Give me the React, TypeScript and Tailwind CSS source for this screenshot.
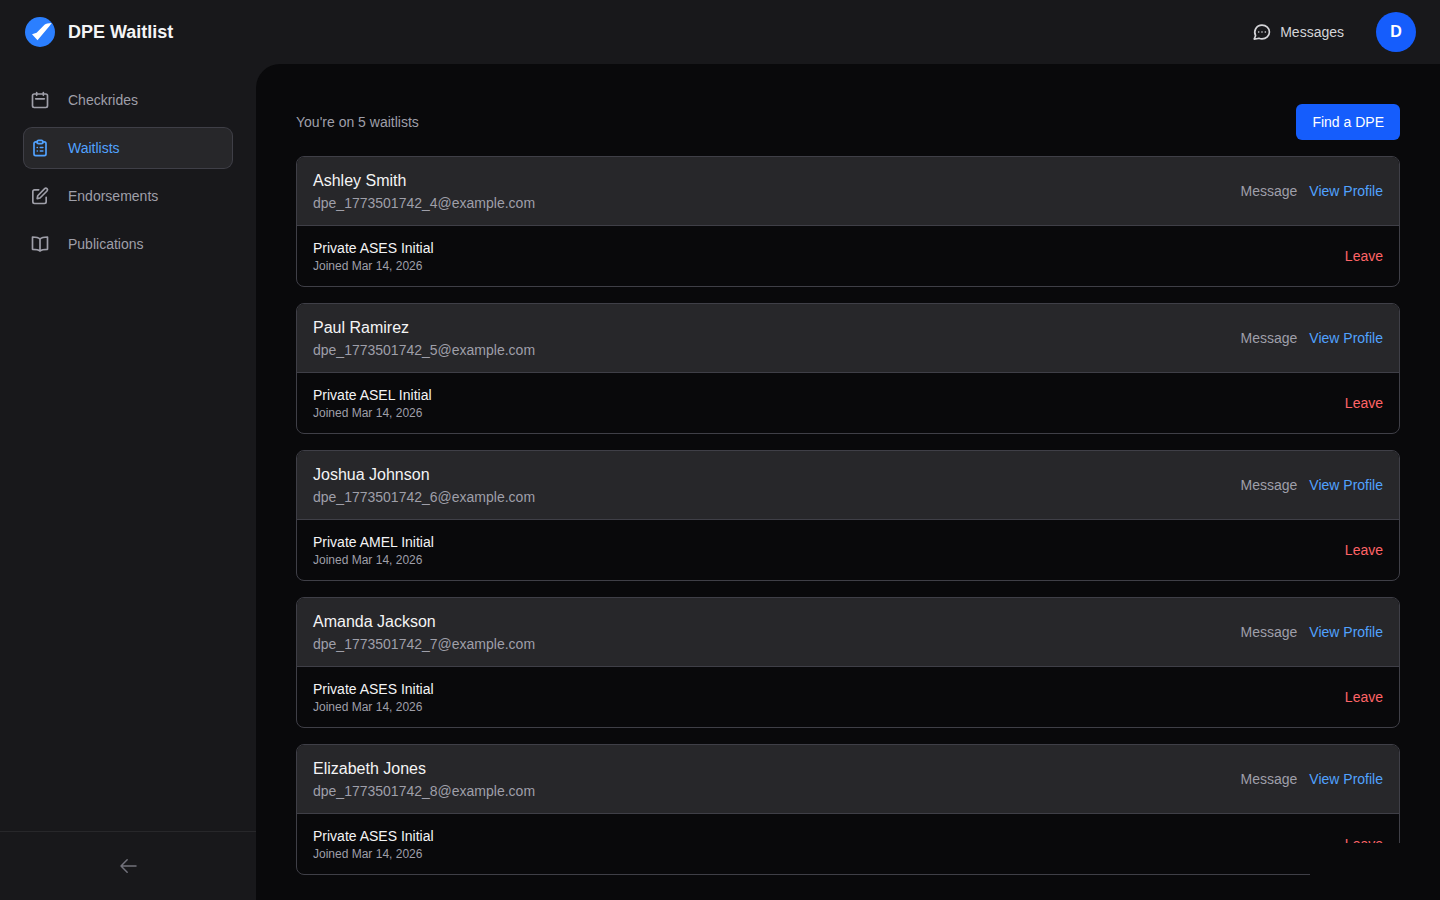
import type { ReactNode } from "react"

type Waitlist = {
  name: string
  email: string
  checkride: string
  joined: string
}

const waitlists: Waitlist[] = [
  { name: "Ashley Smith", email: "dpe_1773501742_4@example.com", checkride: "Private ASES Initial", joined: "Mar 14, 2026" },
  { name: "Paul Ramirez", email: "dpe_1773501742_5@example.com", checkride: "Private ASEL Initial", joined: "Mar 14, 2026" },
  { name: "Joshua Johnson", email: "dpe_1773501742_6@example.com", checkride: "Private AMEL Initial", joined: "Mar 14, 2026" },
  { name: "Amanda Jackson", email: "dpe_1773501742_7@example.com", checkride: "Private ASES Initial", joined: "Mar 14, 2026" },
  { name: "Elizabeth Jones", email: "dpe_1773501742_8@example.com", checkride: "Private ASES Initial", joined: "Mar 14, 2026" },
]

function Icon({ children, width = 2 }: { children: ReactNode; width?: number }) {
  return (
    <svg
      viewBox="0 0 24 24"
      fill="none"
      stroke="currentColor"
      strokeWidth={width}
      strokeLinecap="round"
      strokeLinejoin="round"
      className="size-5"
      aria-hidden="true"
    >
      {children}
    </svg>
  )
}

const navItems = [
  {
    label: "Checkrides",
    icon: (
      <Icon>
        <rect x="3" y="4.8" width="18" height="16.2" rx="2" />
        <path d="M8 3v3.4M16 3v3.4M6.8 10.6h10.4" />
      </Icon>
    ),
  },
  {
    label: "Waitlists",
    active: true,
    icon: (
      <Icon>
        <path d="M8 4.6H6.8a2 2 0 0 0-2 2v12.6a2 2 0 0 0 2 2h10.4a2 2 0 0 0 2-2V6.600a2 2 0 0 0-2-2H16" />
        <rect x="8.4" y="2.8" width="7.2" height="4" rx="2" />
        <path d="M8.700 11.400h.1M12.400 11.400h3M8.700 15.600h.1M12.400 15.600h3" />
      </Icon>
    ),
  },
  {
    label: "Endorsements",
    icon: (
      <Icon>
        <path d="M10.500 4.600H5.400a2 2 0 0 0-2 2V19a2 2 0 0 0 2 2H17.400a2 2 0 0 0 2-2v-5.500" />
        <path d="M17.600 3.200a1.900 1.900 0 0 1 2.800 2.800l-8.400 8.400-3.400.8.700-3.500z" />
      </Icon>
    ),
  },
  {
    label: "Publications",
    icon: (
      <Icon>
        <path d="M12 6.200C10.300 4.400 7.500 3.600 3 3.600v14.800c4.500 0 7.300.6 9 2 1.700-1.400 4.500-2 9-2V3.600c-4.500 0-7.300.8-9 2.600zM12 6.200v14" />
      </Icon>
    ),
  },
]

function Logo() {
  return (
    <svg viewBox="0 0 32 32" className="size-8" aria-hidden="true">
      <circle cx="16" cy="16" r="15" fill="#2b7fff" />
      <path d="M8 18.200 12.600 16.800 20.500 8.700Q22.500 7 27.700 7L25.300 10.200 13.500 24.200Z" fill="#fff" />
    </svg>
  )
}

function WaitlistCard({ item }: { item: Waitlist }) {
  return (
    <li className="overflow-hidden rounded-lg border border-zinc-700">
      <div className="flex items-center justify-between border-b border-zinc-700 bg-zinc-800 px-4 py-3">
        <div>
          <h2 className="text-base text-zinc-100">{item.name}</h2>
          <p className="text-sm text-zinc-400">{item.email}</p>
        </div>
        <div className="flex gap-3 text-sm">
          <button type="button" className="text-zinc-400 hover:text-zinc-300">Message</button>
          <a href="#profile" className="text-[#51a2ff] hover:text-blue-300">View Profile</a>
        </div>
      </div>
      <div className="flex items-center justify-between px-4 py-3">
        <div>
          <p className="text-sm text-zinc-100">{item.checkride}</p>
          <p className="text-xs text-zinc-400">Joined {item.joined}</p>
        </div>
        <button type="button" className="text-sm text-[#ff6467] hover:text-red-300">Leave</button>
      </div>
    </li>
  )
}

export default function App() {
  return (
    <div className="flex h-screen flex-col overflow-hidden bg-[#18181b] font-['Liberation_Sans',Arial,sans-serif] text-zinc-100">
      <header className="flex h-16 shrink-0 items-center justify-between px-6">
        <a href="#home" className="flex items-center gap-3">
          <Logo />
          <span className="text-lg font-bold">DPE Waitlist</span>
        </a>
        <div className="flex items-center gap-8">
          <a href="#messages" className="flex items-center gap-2 text-sm text-zinc-300">
            <Icon>
              <path d="M2.600 20.500 4.300 16.500C1.400 11 5 3.800 12 3.800c5 0 8.900 3.600 8.900 8.200S17 20.300 12 20.300c-1.300 0-2.500-.2-3.600-.7Q6 20.500 2.600 20.500z" />
              <path d="M8 12h.01M12 12h.01M16 12h.01" />
            </Icon>
            Messages
          </a>
          <button type="button" aria-label="Account" className="size-10 rounded-full bg-[#155dfc] font-bold text-white">
            D
          </button>
        </div>
      </header>

      <div className="flex min-h-0 flex-1">
        <aside className="flex w-64 shrink-0 flex-col justify-between">
          <nav className="px-6 pt-4">
            <ul className="flex flex-col gap-2">
              {navItems.map((item) => (
                <li key={item.label}>
                  <a
                    href={`#${item.label.toLowerCase()}`}
                    aria-current={item.active ? "page" : undefined}
                    className={
                      item.active
                        ? "flex h-10 items-center gap-[18px] rounded-lg bg-zinc-800 pl-1.5 text-sm text-[#51a2ff] ring-1 ring-zinc-700"
                        : "flex h-10 items-center gap-[18px] rounded-lg pl-1.5 text-sm text-zinc-400 hover:bg-zinc-800"
                    }
                  >
                    {item.icon}
                    {item.label}
                  </a>
                </li>
              ))}
            </ul>
          </nav>
          <div className="flex justify-center border-t border-zinc-800 p-4">
            <button type="button" aria-label="Collapse sidebar" className="flex size-9 items-center justify-center text-zinc-500">
              <Icon width={1.8}>
                <path d="M11 19.400 3.600 12m0 0 7.400-7.400M3.600 12h18" />
              </Icon>
            </button>
          </div>
        </aside>

        <main className="min-w-0 flex-1 overflow-hidden rounded-tl-3xl bg-[#09090b] p-10">
          <div className="mb-4 flex items-center justify-between">
            <p className="text-sm text-zinc-400">You're on {waitlists.length} waitlists</p>
            <a href="#find" className="rounded-md bg-[#155dfc] px-4 py-2 text-sm text-white hover:bg-blue-700">
              Find a DPE
            </a>
          </div>
          <ul className="flex flex-col gap-4">
            {waitlists.map((item) => (
              <WaitlistCard key={item.email} item={item} />
            ))}
          </ul>
        </main>
      </div>

      <div className="fixed right-0 bottom-0 h-[57px] w-[130px] bg-[#09090b]" />
    </div>
  )
}
